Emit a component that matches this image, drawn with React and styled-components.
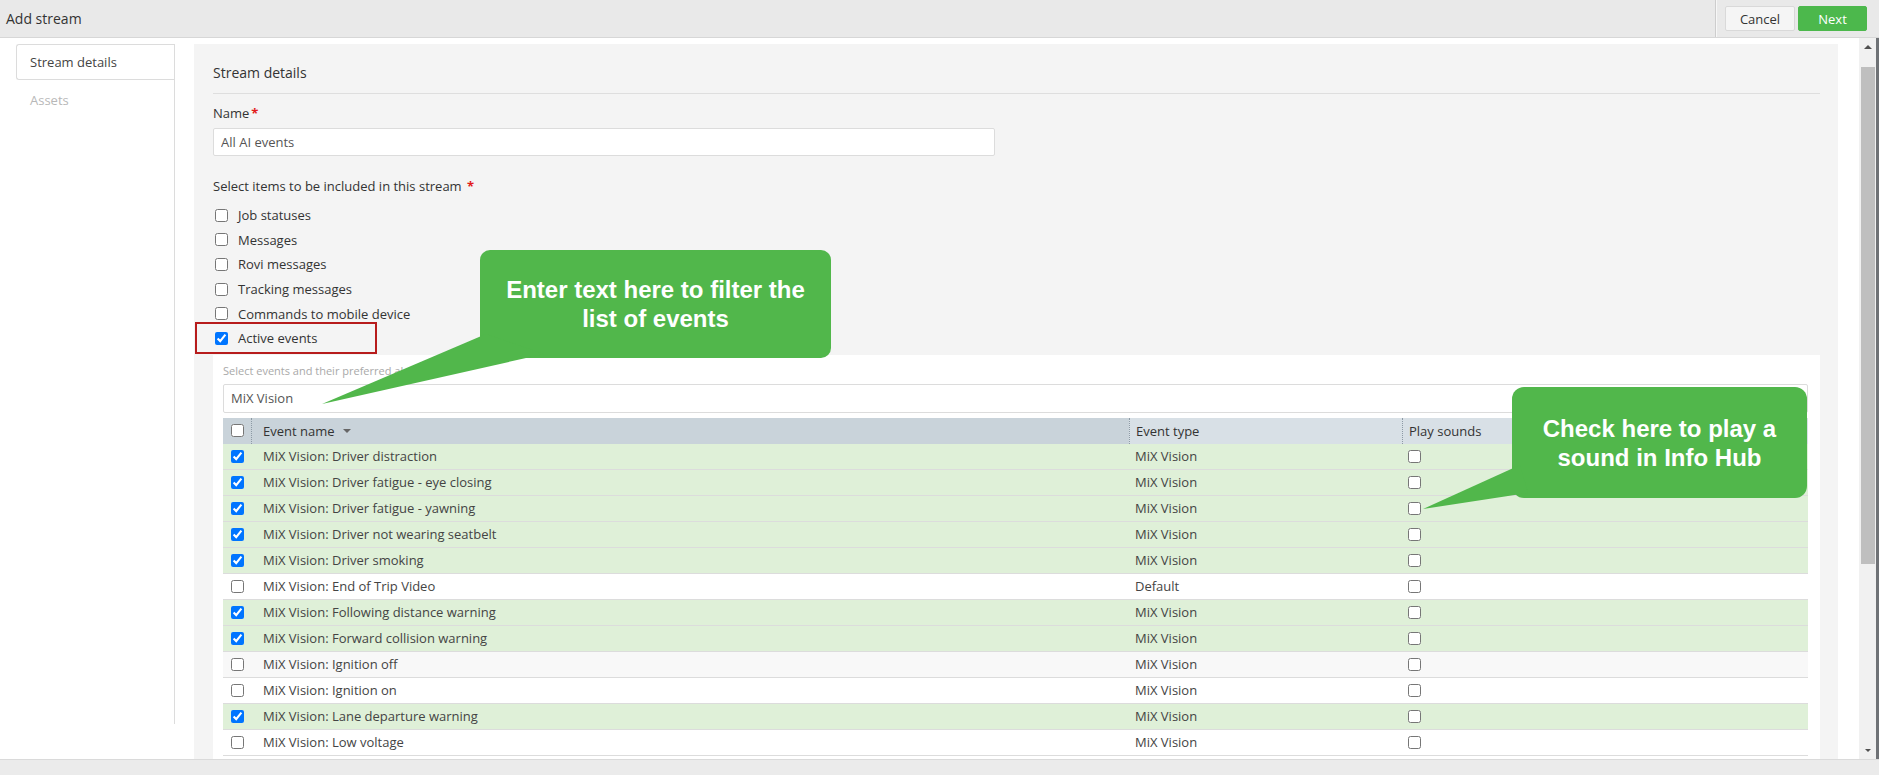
import React from "react";
import styled, { createGlobalStyle } from "styled-components";

const GlobalStyle = createGlobalStyle`
  html, body {
    margin: 0;
    padding: 0;
  }
  body {
    font-family: "Open Sans", "Liberation Sans", sans-serif;
    color: #333;
    background: #fff;
    overflow: hidden;
  }
  * {
    box-sizing: border-box;
  }
`;

const Page = styled.div`
  position: relative;
  width: 1879px;
  height: 775px;
  display: flex;
  flex-direction: column;
  overflow: hidden;
`;

const TopBar = styled.header`
  height: 38px;
  flex-shrink: 0;
  display: flex;
  align-items: center;
  background: #e9e9e9;
  border-bottom: 1px solid #d7d7d7;
`;

const Title = styled.div`
  flex: 1;
  padding-left: 6px;
  font-size: 14px;
  color: #333;
`;

const Actions = styled.div`
  height: 100%;
  display: flex;
  align-items: center;
  gap: 3px;
  padding: 0 12px 0 9px;
  border-left: 1px solid #cdcdcd;
  box-shadow: inset 1px 0 0 #f7f7f7;
`;

const Button = styled.button`
  width: ${(p) => (p.$primary ? "69px" : "70px")};
  height: 25px;
  padding: 0;
  font-family: "Open Sans", sans-serif;
  font-size: 13px;
  border-radius: 2px;
  cursor: pointer;
  color: ${(p) => (p.$primary ? "#fff" : "#333")};
  background: ${(p) => (p.$primary ? "#4cb84c" : "#f5f5f5")};
  border: 1px solid ${(p) => (p.$primary ? "#4cb84c" : "#d9d9d9")};
`;

const Body = styled.div`
  flex: 1;
  min-height: 0;
  display: flex;
`;

const Viewport = styled.div`
  flex: 1;
  min-width: 0;
  overflow: hidden;
  display: flex;
  align-items: flex-start;
  padding-top: 6px;
`;

const ScrollBar = styled.div`
  width: 20px;
  flex-shrink: 0;
  display: flex;
  flex-direction: column;
  background: #f1f1f1;
  border-right: 3px solid #6f7276;
`;

const ScrollButton = styled.div`
  height: 17px;
  display: flex;
  align-items: center;
  justify-content: center;

  &::before {
    content: "";
    width: 0;
    height: 0;
    border-left: ${(p) => p.$size}px solid transparent;
    border-right: ${(p) => p.$size}px solid transparent;
    ${(p) => (p.$down ? "border-top" : "border-bottom")}: ${(p) => p.$size}px solid #505050;
  }
`;

const ScrollTrack = styled.div`
  flex: 1;
  padding: 12px 1px 0 2px;
`;

const Thumb = styled.div`
  height: 497px;
  background: #bfbfbf;
`;

const Sidebar = styled.nav`
  width: 175px;
  flex-shrink: 0;
  height: 680px;
  padding-left: 16px;
  border-right: 1px solid #dcdcdc;
`;

const SideTab = styled.div`
  height: ${(p) => (p.$active ? "36px" : "40px")};
  padding-left: 13px;
  display: flex;
  align-items: center;
  font-size: 13px;
  color: ${(p) => (p.$active ? "#444" : "#b8b8b8")};
  background: ${(p) => (p.$active ? "#fff" : "transparent")};
  border: 1px solid ${(p) => (p.$active ? "#dcdcdc" : "transparent")};
  border-right: none;
  border-radius: 3px 0 0 3px;
`;

const Panel = styled.main`
  width: 1644px;
  margin-left: 19px;
  flex-shrink: 0;
  min-height: 1000px;
  background: #f4f4f4;
  padding: 19px 18px 0 19px;
`;

const PanelTitle = styled.h2`
  margin: 0;
  font-size: 14px;
  font-weight: 400;
  line-height: 20px;
  padding-bottom: 10px;
  border-bottom: 1px solid #dedede;
  color: #333;
`;

const Label = styled.div`
  margin-top: ${(p) => p.$gap || "10px"};
  font-size: 13px;
  line-height: 18px;
  color: #333;
`;

const Required = styled.span`
  color: #e21b1b;
  font-weight: 700;
  margin-left: 2px;
`;

const TextField = styled.input`
  display: block;
  margin-top: ${(p) => p.$gap || "6px"};
  width: ${(p) => p.$width || "100%"};
  height: ${(p) => p.$height || "28px"};
  padding: 0 7px;
  font-family: "Open Sans", sans-serif;
  font-size: 13px;
  color: #555;
  background: #fff;
  border: 1px solid #dcdcdc;
  border-radius: 2px;
  outline: none;
`;

const CheckList = styled.div`
  margin-top: 8px;
  display: flex;
  flex-direction: column;
`;

const CheckRow = styled.label`
  position: relative;
  height: 24.6px;
  padding-left: 2px;
  display: flex;
  align-items: center;
  gap: 10px;
  font-size: 13px;
  color: #333;
`;

const Box = styled.input`
  margin: 0;
  width: 13px;
  height: 13px;
  flex-shrink: 0;
`;

const Highlight = styled.span`
  position: absolute;
  left: -18px;
  top: -4px;
  width: 182px;
  height: 32px;
  border: 2px solid #b71c1c;
  pointer-events: none;
`;

const Picker = styled.section`
  margin-top: 4px;
  background: #fff;
  padding: 9px 12px 20px 10px;
`;

const Hint = styled.div`
  font-size: 11px;
  line-height: 14px;
  color: #a9a9a9;
`;

const Grid = styled.div`
  margin-top: 5px;
  display: flex;
  flex-direction: column;
`;

const GridRow = styled.div`
  display: grid;
  grid-template-columns: 28px 878px 273px 1fr;
  height: 26px;
  font-size: 13px;
  color: #444;
  background: ${(p) => p.$bg};
  border-bottom: ${(p) => (p.$head ? "none" : "1px solid #dcdcdc")};
`;

const Cell = styled.div`
  display: flex;
  align-items: center;
  justify-content: ${(p) => (p.$center ? "center" : "flex-start")};
  padding-left: ${(p) => p.$pad || "0"};
  white-space: nowrap;
  overflow: hidden;
`;

const HeadCell = styled(Cell)`
  color: #333;
  background: ${(p) => (p.$sorted ? "#c9d3da" : "#d8e0e6")};
  border-left: ${(p) => (p.$first ? "none" : "1px dotted #8d9aa5")};
`;

const Caret = styled.span`
  margin-left: 8px;
  width: 0;
  height: 0;
  border-left: 4px solid transparent;
  border-right: 4px solid transparent;
  border-top: 4px solid #666;
`;

const Callout = styled.div`
  position: absolute;
  z-index: 10;
  left: ${(p) => p.$x}px;
  top: ${(p) => p.$y}px;
  width: ${(p) => p.$w}px;
  height: ${(p) => p.$h}px;
  display: flex;
  align-items: center;
  justify-content: center;
  text-align: center;
  background: #51b74b;
  border-radius: ${(p) => p.$r}px;
  color: #fff;
  font-family: "Liberation Sans", Arial, sans-serif;
  font-weight: 700;
  font-size: 24px;
  line-height: 29px;

  svg {
    position: absolute;
    left: 0;
    top: 0;
    overflow: visible;
  }
  span {
    position: relative;
  }
`;

const BottomBar = styled.footer`
  height: 16px;
  flex-shrink: 0;
  background: #ebebeb;
  border-top: 1px solid #dadada;
`;

const items = [
  { label: "Job statuses", checked: false },
  { label: "Messages", checked: false },
  { label: "Rovi messages", checked: false },
  { label: "Tracking messages", checked: false },
  { label: "Commands to mobile device", checked: false },
  { label: "Active events", checked: true, marked: true },
];

const events = [
  { name: "MiX Vision: Driver distraction", type: "MiX Vision", on: true },
  { name: "MiX Vision: Driver fatigue - eye closing", type: "MiX Vision", on: true },
  { name: "MiX Vision: Driver fatigue - yawning", type: "MiX Vision", on: true },
  { name: "MiX Vision: Driver not wearing seatbelt", type: "MiX Vision", on: true },
  { name: "MiX Vision: Driver smoking", type: "MiX Vision", on: true },
  { name: "MiX Vision: End of Trip Video", type: "Default", on: false },
  { name: "MiX Vision: Following distance warning", type: "MiX Vision", on: true },
  { name: "MiX Vision: Forward collision warning", type: "MiX Vision", on: true },
  { name: "MiX Vision: Ignition off", type: "MiX Vision", on: false, hover: true },
  { name: "MiX Vision: Ignition on", type: "MiX Vision", on: false },
  { name: "MiX Vision: Lane departure warning", type: "MiX Vision", on: true },
  { name: "MiX Vision: Low voltage", type: "MiX Vision", on: false },
];

function rowColour(ev) {
  if (ev.on) return "#dff0d8";
  if (ev.hover) return "#f8f8f8";
  return "#fff";
}

export default function App() {
  return (
    <Page>
      <GlobalStyle />
      <TopBar>
        <Title>Add stream</Title>
        <Actions>
          <Button>Cancel</Button>
          <Button $primary>Next</Button>
        </Actions>
      </TopBar>

      <Body>
        <Viewport>
          <Sidebar>
            <SideTab $active>Stream details</SideTab>
            <SideTab>Assets</SideTab>
          </Sidebar>

          <Panel>
            <PanelTitle>Stream details</PanelTitle>

            <Label>
              Name<Required>*</Required>
            </Label>
            <TextField readOnly value="All AI events" $width="782px" />

            <Label $gap="21px">
              Select items to be included in this stream <Required>*</Required>
            </Label>
            <CheckList>
              {items.map((it) => (
                <CheckRow key={it.label}>
                  <Box type="checkbox" readOnly checked={it.checked} />
                  {it.label}
                  {it.marked && <Highlight />}
                </CheckRow>
              ))}
            </CheckList>

            <Picker>
              <Hint>Select events and their preferred alerts</Hint>
              <TextField readOnly value="MiX Vision" $height="29px" />
              <Grid>
                <GridRow $head>
                  <HeadCell $first $sorted $center>
                    <Box type="checkbox" readOnly checked={false} />
                  </HeadCell>
                  <HeadCell $sorted $pad="11px">
                    Event name
                    <Caret />
                  </HeadCell>
                  <HeadCell $pad="6px">Event type</HeadCell>
                  <HeadCell $pad="6px">Play sounds</HeadCell>
                </GridRow>
                {events.map((ev) => (
                  <GridRow key={ev.name} $bg={rowColour(ev)}>
                    <Cell $center>
                      <Box type="checkbox" readOnly checked={ev.on} />
                    </Cell>
                    <Cell $pad="12px">{ev.name}</Cell>
                    <Cell $pad="6px">{ev.type}</Cell>
                    <Cell $pad="6px">
                      <Box type="checkbox" readOnly checked={false} />
                    </Cell>
                  </GridRow>
                ))}
              </Grid>
            </Picker>
          </Panel>
        </Viewport>

        <ScrollBar>
          <ScrollButton $size={4} />
          <ScrollTrack>
            <Thumb />
          </ScrollTrack>
          <ScrollButton $down $size={3} />
        </ScrollBar>
      </Body>

      <BottomBar />

      <Callout $x={480} $y={250} $w={351} $h={108} $r={10}>
        <svg width="1" height="1">
          <polygon points="6,84 -158,154 64,104" fill="#51b74b" />
        </svg>
        <span>
          Enter text here to filter the
          <br />
          list of events
        </span>
      </Callout>

      <Callout $x={1512} $y={387} $w={295} $h={111} $r={12}>
        <svg width="1" height="1">
          <polygon points="8,78 -89,122 16,106" fill="#51b74b" />
        </svg>
        <span>
          Check here to play a
          <br />
          sound in Info Hub
        </span>
      </Callout>
    </Page>
  );
}
